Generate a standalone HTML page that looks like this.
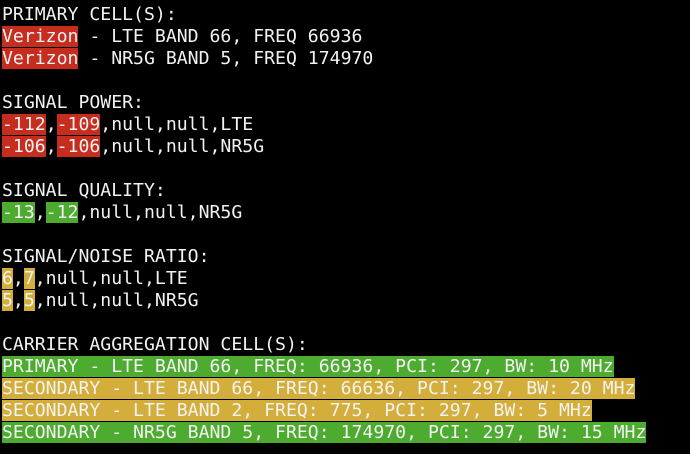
<!DOCTYPE html>
<html><head><meta charset="utf-8"><style>
html,body{margin:0;padding:0;background:#000;width:690px;height:454px;overflow:hidden}
pre{margin:0;padding:4px 0 0 2px;font-family:"DejaVu Sans Mono","Liberation Mono",monospace;font-size:18.15px;line-height:22px;color:#f2f2f2;white-space:pre}
.r{background:#c62d1f}.g{background:#4dab2f}.y{background:#d4ae3a}
</style></head><body><pre>PRIMARY CELL(S):
<span class="r">Verizon</span> - LTE BAND 66, FREQ 66936
<span class="r">Verizon</span> - NR5G BAND 5, FREQ 174970

SIGNAL POWER:
<span class="r">-112</span>,<span class="r">-109</span>,null,null,LTE
<span class="r">-106</span>,<span class="r">-106</span>,null,null,NR5G

SIGNAL QUALITY:
<span class="g">-13</span>,<span class="g">-12</span>,null,null,NR5G

SIGNAL/NOISE RATIO:
<span class="y">6</span>,<span class="y">7</span>,null,null,LTE
<span class="y">5</span>,<span class="y">5</span>,null,null,NR5G

CARRIER AGGREGATION CELL(S):
<span class="g">PRIMARY - LTE BAND 66, FREQ: 66936, PCI: 297, BW: 10 MHz</span>
<span class="y">SECONDARY - LTE BAND 66, FREQ: 66636, PCI: 297, BW: 20 MHz</span>
<span class="y">SECONDARY - LTE BAND 2, FREQ: 775, PCI: 297, BW: 5 MHz</span>
<span class="g">SECONDARY - NR5G BAND 5, FREQ: 174970, PCI: 297, BW: 15 MHz</span></pre></body></html>
